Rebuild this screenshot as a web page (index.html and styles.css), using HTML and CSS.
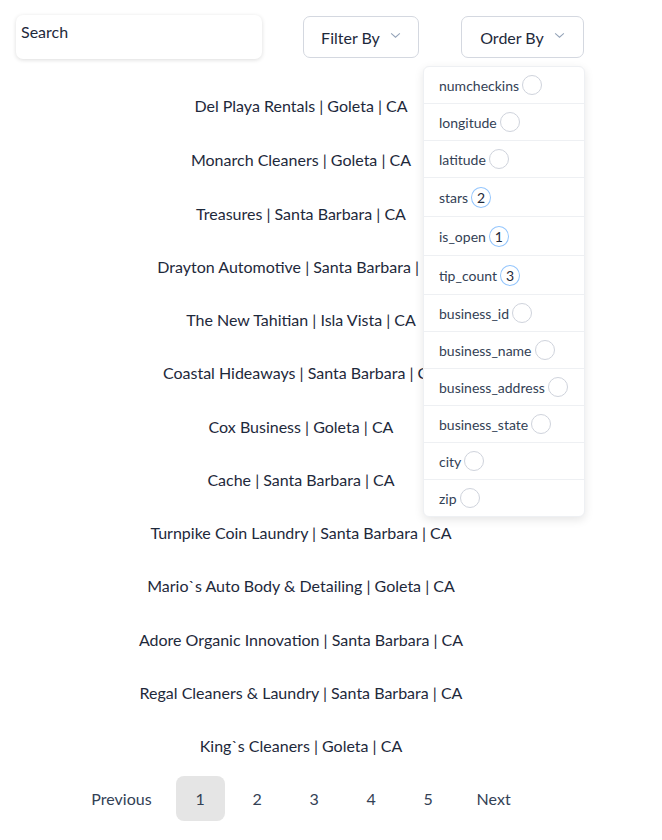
FILE: index.html
```html
<!DOCTYPE html>
<html>
<head>
<meta charset="utf-8">
<link rel="stylesheet" href="styles.css">
</head>
<body>
<div class="page">
  <div class="toolbar">
    <div class="search">Search</div>
    <div class="btn filter">Filter By <svg class="chev" viewBox="0 0 12 8" width="11" height="7"><path d="M1 1.5 L6 6 L11 1.5" fill="none" stroke="#94a3b8" stroke-width="1.2"/></svg></div>
    <div class="order-wrap">
      <div class="btn order">Order By <svg class="chev" viewBox="0 0 12 8" width="11" height="7"><path d="M1 1.5 L6 6 L11 1.5" fill="none" stroke="#94a3b8" stroke-width="1.2"/></svg></div>
      <ul class="menu">
        <li><span>numcheckins</span><i class="dot"></i></li>
        <li><span>longitude</span><i class="dot"></i></li>
        <li><span>latitude</span><i class="dot"></i></li>
        <li class="tall"><span>stars</span><i class="dot num">2</i></li>
        <li class="tall"><span>is_open</span><i class="dot num">1</i></li>
        <li class="tall"><span>tip_count</span><i class="dot num">3</i></li>
        <li><span>business_id</span><i class="dot"></i></li>
        <li><span>business_name</span><i class="dot"></i></li>
        <li><span>business_address</span><i class="dot"></i></li>
        <li><span>business_state</span><i class="dot"></i></li>
        <li><span>city</span><i class="dot"></i></li>
        <li><span>zip</span><i class="dot"></i></li>
      </ul>
    </div>
  </div>
  <ul class="list">
    <li>Del Playa Rentals | Goleta | CA</li>
    <li>Monarch Cleaners | Goleta | CA</li>
    <li>Treasures | Santa Barbara | CA</li>
    <li>Drayton Automotive | Santa Barbara | CA</li>
    <li>The New Tahitian | Isla Vista | CA</li>
    <li>Coastal Hideaways | Santa Barbara | CA</li>
    <li>Cox Business | Goleta | CA</li>
    <li>Cache | Santa Barbara | CA</li>
    <li>Turnpike Coin Laundry | Santa Barbara | CA</li>
    <li>Mario`s Auto Body &amp; Detailing | Goleta | CA</li>
    <li>Adore Organic Innovation | Santa Barbara | CA</li>
    <li>Regal Cleaners &amp; Laundry | Santa Barbara | CA</li>
    <li>King`s Cleaners | Goleta | CA</li>
  </ul>
  <div class="pager">
    <span class="pg prev">Previous</span>
    <span class="pg num active">1</span>
    <span class="pg num">2</span>
    <span class="pg num">3</span>
    <span class="pg num">4</span>
    <span class="pg num">5</span>
    <span class="pg next">Next</span>
  </div>
</div>
</body>
</html>
```
FILE: styles.css
```css
* { box-sizing: border-box; }
body {
  margin: 0;
  background: #fff;
  font-family: "Lato", "Noto Sans", sans-serif;
  color: #1e293b;
}
.page { width: 602px; }
.toolbar {
  display: flex;
  align-items: flex-start;
  padding: 15px 0 0 16px;
  height: 67px;
}
.search {
  width: 246px;
  height: 44px;
  border-radius: 7px;
  box-shadow: 0 1px 4px rgba(0,0,0,0.14);
  font-size: 16px;
  padding: 7px 5px;
  color: #1e293b;
}
.btn {
  height: 42px;
  margin-top: 1px;
  border: 1px solid #d4d8e0;
  border-radius: 7px;
  display: flex;
  align-items: center;
  justify-content: center;
  gap: 10px;
  font-size: 16px;
  color: #1e293b;
  padding-top: 1px;
}
.filter { width: 116px; margin-left: 41px; }
.order-wrap { position: relative; margin-left: 42px; }
.order { width: 123px; }
.chev { margin-top: -4px; }
.menu {
  position: absolute;
  top: 51px;
  left: -38px;
  width: 162px;
  margin: 0;
  padding: 0;
  list-style: none;
  background: #fff;
  border: 1px solid #eef0f3;
  border-radius: 6px;
  box-shadow: 0 3px 10px rgba(0,0,0,0.10);
  z-index: 2;
}
.menu li {
  height: 37px;
  display: flex;
  align-items: center;
  padding-left: 15px;
  font-size: 14px;
  color: #334155;
  border-bottom: 1px solid #eef0f3;
}
.menu li:last-child { border-bottom: none; height: 36px; }
.menu li.tall { height: 39px; }
.dot {
  display: inline-flex;
  align-items: center;
  justify-content: center;
  width: 20px;
  height: 20px;
  margin-left: 3px;
  border: 1px solid #cfd3dc;
  border-radius: 50%;
  font-style: normal;
  font-size: 14px;
  color: #1e293b;
}
.dot.num {
  border: 1.5px solid #93c5fd;
  height: 21px;
}
.list {
  list-style: none;
  margin: 0;
  padding: 0;
}
.list li {
  height: 53.25px;
  text-align: center;
  font-size: 16px;
  line-height: 20px;
  padding-top: 30px;
}
.list li:first-child { padding-top: 29px; }
.pager {
  display: flex;
  justify-content: center;
  align-items: center;
  margin-top: 17px;
  font-size: 16px;
  color: #334155;
}
.pg {
  height: 45px;
  display: flex;
  align-items: center;
  justify-content: center;
}
.pg.num { width: 49px; margin: 0 4px; border-radius: 8px; }
.pg.active { background: #e5e5e5; }
.prev { margin-right: 20px; }
.next { margin-left: 20px; }
```
